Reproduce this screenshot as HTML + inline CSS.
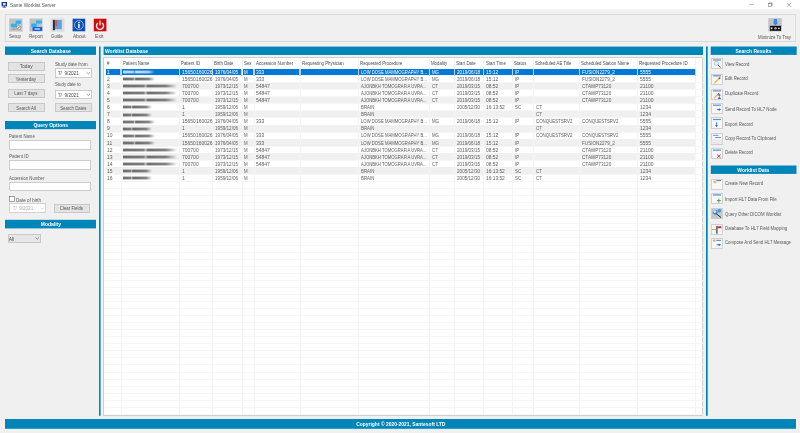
<!DOCTYPE html><html><head><meta charset="utf-8"><style>
*{margin:0;padding:0;box-sizing:border-box}
html,body{width:800px;height:433px;overflow:hidden;background:#f0f0f0;font-family:"Liberation Sans", sans-serif;color:#333}
.a{position:absolute}
.t{position:absolute;white-space:pre;line-height:6px;height:6px;filter:grayscale(1)}
.hb{position:absolute;background:#0085b9}
.btn{position:absolute;background:#e3e3e3;border:0.5px solid #c8c8c8}
.inp{position:absolute;background:#fff;border:0.5px solid #cbcbcb}
.ib{position:absolute;width:11.7px;height:11.2px;background:#f7f7f7;border:0.55px solid #d0d0d0}
svg{position:absolute;overflow:visible}
</style></head><body>
<svg style="left:0;top:0" width="800" height="12"><rect x="0" y="0" width="800" height="9.4" fill="#fff"/></svg>
<svg style="left:0;top:0" width="10" height="10"><rect x="1.6" y="2" width="5.4" height="4.4" fill="#1636a0"/><rect x="3" y="3" width="2.6" height="2.4" fill="#dfe6ff"/><rect x="3.6" y="6.4" width="1.4" height="1" fill="#1636a0"/><rect x="2.6" y="7.3" width="3.4" height="0.7" fill="#3a70e0"/></svg>
<div class="t" style="left:9.75px;top:2.05px;font-size:5.4px;color:#555;transform:scaleX(0.878);transform-origin:0 0;">Sante Worklist Server</div>
<svg style="left:0;top:0" width="800" height="10"><path d="M749 4.6H753.7" stroke="#777" stroke-width="0.5"/><rect x="768.3" y="3.6" width="3" height="3" fill="none" stroke="#666" stroke-width="0.5"/><path d="M769.2 3.6V2.8H772.1V5.8H771.3" fill="none" stroke="#666" stroke-width="0.5"/><path d="M787 2.8L791 6.8M791 2.8L787 6.8" stroke="#666" stroke-width="0.55"/></svg>
<div class="a" style="left:4.7px;top:14px;width:791.2px;height:28px;border:0.6px solid #d9d9d9"></div>
<svg style="left:0;top:0" width="800" height="40"><rect x="9" y="18.25" width="13.75" height="13.5" fill="#d2d2d2"/><rect x="9.8" y="19" width="12.2" height="12" fill="#c2c2c2"/><path d="M18.4 23.9V25.2M13.8 27.2V28.6M11.5 29.2H16.2" stroke="#8a8a8a" stroke-width="0.6"/><rect x="15.6" y="20.5" width="5.5" height="3.4" fill="#2ab4f2"/><rect x="10.8" y="23.7" width="6.1" height="3.5" fill="#2ab4f2"/><circle cx="18.7" cy="27.7" r="2.1" fill="#f2f2f2" stroke="#6a6a6a" stroke-width="0.45"/><path d="M17.7 28.8L19.8 26.6" stroke="#d02020" stroke-width="0.9"/><rect x="29.25" y="18.25" width="13.5" height="13.5" fill="#d2d2d2"/><rect x="30" y="19" width="12" height="12" fill="#c2c2c2"/><path d="M38.6 23.3V24.6M34 27V28" stroke="#8a8a8a" stroke-width="0.6"/><rect x="36" y="20.4" width="5.75" height="3.1" fill="#2ab4f2"/><rect x="31.25" y="23.5" width="5.5" height="3.5" fill="#2ab4f2"/><rect x="32.5" y="27" width="9.75" height="4" fill="#1c5fe6"/><rect x="34.5" y="28.2" width="5.5" height="1.6" fill="#a8c6ff"/><rect x="50.5" y="18.25" width="14" height="13.5" fill="#dedede"/><rect x="54.9" y="20" width="6.9" height="9.3" fill="#5ea2e2"/><rect x="54.9" y="29.3" width="6.9" height="0.9" fill="#c8d4dc"/><rect x="52.9" y="19.9" width="2" height="10.3" fill="#2a2a3a"/><rect x="55.5" y="20" width="1.3" height="6" fill="#e04040"/><rect x="72.6" y="18.7" width="12.6" height="12.6" fill="#0d4fb6"/><circle cx="78.9" cy="25" r="4.4" fill="none" stroke="#e8eeff" stroke-width="0.6"/><circle cx="78.9" cy="22.5" r="0.85" fill="#f0f4ff"/><rect x="78.1" y="23.9" width="1.6" height="4.1" fill="#f0f4ff"/><rect x="93.8" y="18.7" width="12.6" height="12.6" fill="#d40808"/><path d="M98 23A3.5 3.5 0 1 0 102 23" fill="none" stroke="#f8f0f0" stroke-width="1.45"/><path d="M100 20.4V25.3" stroke="#f8f0f0" stroke-width="1.3"/><rect x="768.3" y="18.2" width="13.6" height="13.3" fill="#c4c4c4"/><rect x="773.8" y="19" width="3.2" height="3.8" fill="#2e8af0"/><path d="M772.6 22.6H778.2L775.4 25.4Z" fill="#2e8af0"/><rect x="769.9" y="25.8" width="11.1" height="5" fill="#0a0a1a"/><rect x="770.8" y="27.4" width="1.6" height="1.8" fill="#eee"/><circle cx="775.5" cy="28.3" r="1.2" fill="#aaa"/><circle cx="778.9" cy="28.3" r="0.9" fill="#ddd"/></svg>
<div class="t" style="left:8.75px;top:33.20px;font-size:5.4px;color:#565656;transform:scaleX(0.850);transform-origin:0 0;">Setup</div>
<div class="t" style="left:28.60px;top:33.20px;font-size:5.4px;color:#565656;transform:scaleX(0.858);transform-origin:0 0;">Report</div>
<div class="t" style="left:51.10px;top:33.20px;font-size:5.4px;color:#565656;transform:scaleX(0.812);transform-origin:0 0;">Guide</div>
<div class="t" style="left:72.60px;top:33.20px;font-size:5.4px;color:#565656;transform:scaleX(0.893);transform-origin:0 0;">About</div>
<div class="t" style="left:94.50px;top:33.20px;font-size:5.4px;color:#565656;transform:scaleX(0.944);transform-origin:0 0;">Exit</div>
<div class="t" style="left:758.00px;top:33.50px;font-size:5.4px;color:#565656;transform:scaleX(0.817);transform-origin:0 0;">Minimize To Tray</div>
<svg style="left:0;top:0" width="800" height="433"><rect x="5" y="46.5" width="91" height="8.4" fill="#0085b9"/></svg>
<div class="t" style="left:28.74px;top:47.90px;font-size:5.4px;color:#fff;font-weight:bold;transform:scaleX(0.924);transform-origin:50% 0;">Search Database</div>
<div class="btn" style="left:8.1px;top:62px;width:36.5px;height:8.7px"></div>
<div class="t" style="left:18.89px;top:63.40px;font-size:5.4px;color:#565656;transform:scaleX(0.902);transform-origin:50% 0;">Today</div>
<div class="btn" style="left:8.1px;top:74.3px;width:36.5px;height:8.7px"></div>
<div class="t" style="left:14.19px;top:75.70px;font-size:5.4px;color:#565656;transform:scaleX(0.865);transform-origin:50% 0;">Yesterday</div>
<div class="btn" style="left:8.1px;top:89px;width:36.5px;height:8.7px"></div>
<div class="t" style="left:12.29px;top:90.40px;font-size:5.4px;color:#565656;transform:scaleX(0.844);transform-origin:50% 0;">Last 7 days</div>
<div class="btn" style="left:8.1px;top:103.2px;width:36.5px;height:8.7px"></div>
<div class="t" style="left:13.94px;top:104.60px;font-size:5.4px;color:#565656;transform:scaleX(0.806);transform-origin:50% 0;">Search All</div>
<div class="t" style="left:55.00px;top:61.30px;font-size:5.4px;color:#565656;transform:scaleX(0.855);transform-origin:0 0;">Study date from</div>
<div class="t" style="left:55.00px;top:80.80px;font-size:5.4px;color:#565656;transform:scaleX(0.806);transform-origin:0 0;">Study date to</div>
<div class="inp" style="left:54.8px;top:68px;width:36.8px;height:9.7px"></div>
<div class="t" style="left:58.10px;top:70.10px;font-size:5.4px;color:#444;transform:scaleX(0.866);transform-origin:0 0;">7/  9/2021</div>
<svg style="left:0;top:0" width="100" height="110"><path d="M86.6 72.3L88.3 73.9L90 72.3" fill="none" stroke="#4a4a4a" stroke-width="0.5"/></svg>
<div class="inp" style="left:54.8px;top:89.6px;width:36.8px;height:9.7px"></div>
<div class="t" style="left:58.10px;top:91.70px;font-size:5.4px;color:#444;transform:scaleX(0.866);transform-origin:0 0;">7/  9/2021</div>
<svg style="left:0;top:0" width="100" height="110"><path d="M86.6 93.89999999999999L88.3 95.5L90 93.89999999999999" fill="none" stroke="#4a4a4a" stroke-width="0.5"/></svg>
<div class="btn" style="left:55px;top:103.2px;width:37px;height:8.8px"></div>
<div class="t" style="left:57.14px;top:104.60px;font-size:5.4px;color:#565656;transform:scaleX(0.806);transform-origin:50% 0;">Search Dates</div>
<svg style="left:0;top:0" width="800" height="433"><rect x="5" y="121" width="91" height="8.2" fill="#0085b9"/></svg>
<div class="t" style="left:31.75px;top:122.30px;font-size:5.4px;color:#fff;font-weight:bold;transform:scaleX(0.921);transform-origin:50% 0;">Query Options</div>
<div class="t" style="left:9.10px;top:132.85px;font-size:5.4px;color:#565656;transform:scaleX(0.789);transform-origin:0 0;">Patient Name</div>
<div class="inp" style="left:9px;top:140px;width:81.6px;height:9.7px"></div>
<div class="t" style="left:9.10px;top:152.90px;font-size:5.4px;color:#565656;transform:scaleX(0.835);transform-origin:0 0;">Patient ID</div>
<div class="inp" style="left:9px;top:159.9px;width:81.6px;height:9.7px"></div>
<div class="t" style="left:9.10px;top:175.00px;font-size:5.4px;color:#565656;transform:scaleX(0.781);transform-origin:0 0;">Accession Number</div>
<div class="inp" style="left:9px;top:181.6px;width:81.6px;height:9.7px"></div>
<svg style="left:0;top:0" width="100" height="210"><rect x="9.45" y="196.65" width="4.9" height="4.9" fill="#fff" stroke="#4a4a4a" stroke-width="0.5"/></svg>
<div class="t" style="left:15.50px;top:196.50px;font-size:5.4px;color:#565656;transform:scaleX(0.857);transform-origin:0 0;">Date of birth</div>
<div class="inp" style="left:9.1px;top:203.3px;width:36.5px;height:9.7px;border-color:#d2d2d2"></div>
<div class="t" style="left:12.70px;top:205.40px;font-size:5.4px;color:#aaa;transform:scaleX(0.841);transform-origin:0 0;">7/  9/2021</div>
<svg style="left:0;top:0" width="100" height="220"><path d="M40.8 207.6L42.3 209.1L43.8 207.6" fill="none" stroke="#999" stroke-width="0.45"/></svg>
<div class="btn" style="left:54px;top:204px;width:35.6px;height:8.7px"></div>
<div class="t" style="left:57.40px;top:205.40px;font-size:5.4px;color:#565656;transform:scaleX(0.806);transform-origin:50% 0;">Clear Fields</div>
<svg style="left:0;top:0" width="800" height="433"><rect x="5" y="219.8" width="91" height="8.6" fill="#0085b9"/></svg>
<div class="t" style="left:39.55px;top:221.30px;font-size:5.4px;color:#fff;font-weight:bold;transform:scaleX(0.921);transform-origin:50% 0;">Modality</div>
<div class="btn" style="left:8px;top:234px;width:33px;height:8.7px;background:#e6e6e6"></div>
<div class="t" style="left:9.40px;top:235.50px;font-size:5.4px;color:#333;transform:scaleX(0.806);transform-origin:0 0;">All</div>
<svg style="left:0;top:0" width="100" height="250"><path d="M35.6 237.5L37.3 239.2L39 237.5" fill="none" stroke="#444" stroke-width="0.55"/></svg>
<svg style="left:0;top:0" width="800" height="433"><rect x="99" y="46.4" width="1.6" height="369.4" fill="#0085b9"/><rect x="706" y="46.4" width="1.7" height="369.4" fill="#0085b9"/></svg>
<svg style="left:0;top:0" width="800" height="433"><rect x="103.6" y="46.6" width="599.4" height="8.4" fill="#0085b9"/></svg>
<div class="t" style="left:105.40px;top:48.00px;font-size:5.4px;color:#fff;font-weight:bold;transform:scaleX(0.921);transform-origin:0 0;">Worklist Database</div>
<div class="a" style="left:103.4px;top:57.4px;width:599.7px;height:358.20000000000005px;background:#fff;border:0.6px solid #cfcfcf"></div>
<div class="a" style="left:106px;top:68.50px;width:589.5px;height:7.06px;background:#0078d7"></div><div class="a" style="left:104px;top:75.16px;width:598.5px;height:0.45px;background:#f6f6f6"></div><div class="a" style="left:104px;top:82.21px;width:598.5px;height:0.45px;background:#f6f6f6"></div><div class="a" style="left:106px;top:82.61px;width:589.5px;height:7.06px;background:#f0f0f0"></div><div class="a" style="left:104px;top:89.27px;width:598.5px;height:0.45px;background:#f6f6f6"></div><div class="a" style="left:104px;top:96.32px;width:598.5px;height:0.45px;background:#f6f6f6"></div><div class="a" style="left:106px;top:96.72px;width:589.5px;height:7.06px;background:#f0f0f0"></div><div class="a" style="left:104px;top:103.38px;width:598.5px;height:0.45px;background:#f6f6f6"></div><div class="a" style="left:104px;top:110.44px;width:598.5px;height:0.45px;background:#f6f6f6"></div><div class="a" style="left:106px;top:110.84px;width:589.5px;height:7.06px;background:#f0f0f0"></div><div class="a" style="left:104px;top:117.49px;width:598.5px;height:0.45px;background:#f6f6f6"></div><div class="a" style="left:104px;top:124.55px;width:598.5px;height:0.45px;background:#f6f6f6"></div><div class="a" style="left:106px;top:124.95px;width:589.5px;height:7.06px;background:#f0f0f0"></div><div class="a" style="left:104px;top:131.60px;width:598.5px;height:0.45px;background:#f6f6f6"></div><div class="a" style="left:104px;top:138.66px;width:598.5px;height:0.45px;background:#f6f6f6"></div><div class="a" style="left:106px;top:139.06px;width:589.5px;height:7.06px;background:#f0f0f0"></div><div class="a" style="left:104px;top:145.72px;width:598.5px;height:0.45px;background:#f6f6f6"></div><div class="a" style="left:104px;top:152.77px;width:598.5px;height:0.45px;background:#f6f6f6"></div><div class="a" style="left:106px;top:153.17px;width:589.5px;height:7.06px;background:#f0f0f0"></div><div class="a" style="left:104px;top:159.83px;width:598.5px;height:0.45px;background:#f6f6f6"></div><div class="a" style="left:104px;top:166.88px;width:598.5px;height:0.45px;background:#f6f6f6"></div><div class="a" style="left:106px;top:167.28px;width:589.5px;height:7.06px;background:#f0f0f0"></div><div class="a" style="left:104px;top:173.94px;width:598.5px;height:0.45px;background:#f6f6f6"></div><div class="a" style="left:104px;top:181.00px;width:598.5px;height:0.45px;background:#f6f6f6"></div><div class="a" style="left:104px;top:188.05px;width:598.5px;height:0.45px;background:#f6f6f6"></div><div class="a" style="left:104px;top:195.11px;width:598.5px;height:0.45px;background:#f6f6f6"></div><div class="a" style="left:104px;top:202.16px;width:598.5px;height:0.45px;background:#f6f6f6"></div><div class="a" style="left:104px;top:209.22px;width:598.5px;height:0.45px;background:#f6f6f6"></div><div class="a" style="left:104px;top:216.28px;width:598.5px;height:0.45px;background:#f6f6f6"></div><div class="a" style="left:104px;top:223.33px;width:598.5px;height:0.45px;background:#f6f6f6"></div><div class="a" style="left:104px;top:230.39px;width:598.5px;height:0.45px;background:#f6f6f6"></div><div class="a" style="left:104px;top:237.44px;width:598.5px;height:0.45px;background:#f6f6f6"></div><div class="a" style="left:104px;top:244.50px;width:598.5px;height:0.45px;background:#f6f6f6"></div><div class="a" style="left:104px;top:251.56px;width:598.5px;height:0.45px;background:#f6f6f6"></div><div class="a" style="left:104px;top:258.61px;width:598.5px;height:0.45px;background:#f6f6f6"></div><div class="a" style="left:104px;top:265.67px;width:598.5px;height:0.45px;background:#f6f6f6"></div><div class="a" style="left:104px;top:272.72px;width:598.5px;height:0.45px;background:#f6f6f6"></div><div class="a" style="left:104px;top:279.78px;width:598.5px;height:0.45px;background:#f6f6f6"></div><div class="a" style="left:104px;top:286.84px;width:598.5px;height:0.45px;background:#f6f6f6"></div><div class="a" style="left:104px;top:293.89px;width:598.5px;height:0.45px;background:#f6f6f6"></div><div class="a" style="left:104px;top:300.95px;width:598.5px;height:0.45px;background:#f6f6f6"></div><div class="a" style="left:104px;top:308.00px;width:598.5px;height:0.45px;background:#f6f6f6"></div><div class="a" style="left:104px;top:315.06px;width:598.5px;height:0.45px;background:#f6f6f6"></div><div class="a" style="left:104px;top:322.12px;width:598.5px;height:0.45px;background:#f6f6f6"></div><div class="a" style="left:104px;top:329.17px;width:598.5px;height:0.45px;background:#f6f6f6"></div><div class="a" style="left:104px;top:336.23px;width:598.5px;height:0.45px;background:#f6f6f6"></div><div class="a" style="left:104px;top:343.28px;width:598.5px;height:0.45px;background:#f6f6f6"></div><div class="a" style="left:104px;top:350.34px;width:598.5px;height:0.45px;background:#f6f6f6"></div><div class="a" style="left:104px;top:357.40px;width:598.5px;height:0.45px;background:#f6f6f6"></div><div class="a" style="left:104px;top:364.45px;width:598.5px;height:0.45px;background:#f6f6f6"></div><div class="a" style="left:104px;top:371.51px;width:598.5px;height:0.45px;background:#f6f6f6"></div><div class="a" style="left:104px;top:378.56px;width:598.5px;height:0.45px;background:#f6f6f6"></div><div class="a" style="left:104px;top:385.62px;width:598.5px;height:0.45px;background:#f6f6f6"></div><div class="a" style="left:104px;top:392.68px;width:598.5px;height:0.45px;background:#f6f6f6"></div><div class="a" style="left:104px;top:399.73px;width:598.5px;height:0.45px;background:#f6f6f6"></div><div class="a" style="left:104px;top:406.79px;width:598.5px;height:0.45px;background:#f6f6f6"></div><div class="a" style="left:104px;top:413.84px;width:598.5px;height:0.45px;background:#f6f6f6"></div><div class="a" style="left:104px;top:420.90px;width:598.5px;height:0.45px;background:#f6f6f6"></div><div class="a" style="left:120.8px;top:58.0px;width:0.45px;height:357.00000000000006px;background:#f4f4f4"></div><div class="a" style="left:178.9px;top:58.0px;width:0.45px;height:357.00000000000006px;background:#f4f4f4"></div><div class="a" style="left:212.3px;top:58.0px;width:0.45px;height:357.00000000000006px;background:#f4f4f4"></div><div class="a" style="left:241.60000000000002px;top:58.0px;width:0.45px;height:357.00000000000006px;background:#f4f4f4"></div><div class="a" style="left:253.8px;top:58.0px;width:0.45px;height:357.00000000000006px;background:#f4f4f4"></div><div class="a" style="left:299.8px;top:58.0px;width:0.45px;height:357.00000000000006px;background:#f4f4f4"></div><div class="a" style="left:358.2px;top:58.0px;width:0.45px;height:357.00000000000006px;background:#f4f4f4"></div><div class="a" style="left:429.0px;top:58.0px;width:0.45px;height:357.00000000000006px;background:#f4f4f4"></div><div class="a" style="left:454.3px;top:58.0px;width:0.45px;height:357.00000000000006px;background:#f4f4f4"></div><div class="a" style="left:483.40000000000003px;top:58.0px;width:0.45px;height:357.00000000000006px;background:#f4f4f4"></div><div class="a" style="left:512.0px;top:58.0px;width:0.45px;height:357.00000000000006px;background:#f4f4f4"></div><div class="a" style="left:533.3px;top:58.0px;width:0.45px;height:357.00000000000006px;background:#f4f4f4"></div><div class="a" style="left:578.9px;top:58.0px;width:0.45px;height:357.00000000000006px;background:#f4f4f4"></div><div class="a" style="left:637.3px;top:58.0px;width:0.45px;height:357.00000000000006px;background:#f4f4f4"></div><div class="a" style="left:695.3px;top:58.0px;width:0.45px;height:357.00000000000006px;background:#f4f4f4"></div><div class="a" style="left:120.4px;top:68.5px;width:1.2px;height:7.056px;background:#c4d0ea"></div><div class="a" style="left:178.5px;top:68.5px;width:1.2px;height:7.056px;background:#c4d0ea"></div><div class="a" style="left:211.9px;top:68.5px;width:1.2px;height:7.056px;background:#c4d0ea"></div><div class="a" style="left:241.20000000000002px;top:68.5px;width:1.2px;height:7.056px;background:#c4d0ea"></div><div class="a" style="left:253.4px;top:68.5px;width:1.2px;height:7.056px;background:#c4d0ea"></div><div class="a" style="left:299.4px;top:68.5px;width:1.2px;height:7.056px;background:#c4d0ea"></div><div class="a" style="left:357.79999999999995px;top:68.5px;width:1.2px;height:7.056px;background:#c4d0ea"></div><div class="a" style="left:428.59999999999997px;top:68.5px;width:1.2px;height:7.056px;background:#c4d0ea"></div><div class="a" style="left:453.9px;top:68.5px;width:1.2px;height:7.056px;background:#c4d0ea"></div><div class="a" style="left:483.0px;top:68.5px;width:1.2px;height:7.056px;background:#c4d0ea"></div><div class="a" style="left:511.6px;top:68.5px;width:1.2px;height:7.056px;background:#c4d0ea"></div><div class="a" style="left:532.9px;top:68.5px;width:1.2px;height:7.056px;background:#c4d0ea"></div><div class="a" style="left:578.5px;top:68.5px;width:1.2px;height:7.056px;background:#c4d0ea"></div><div class="a" style="left:636.9px;top:68.5px;width:1.2px;height:7.056px;background:#c4d0ea"></div><div class="a" style="left:694.9px;top:68.5px;width:1.2px;height:7.056px;background:#c4d0ea"></div>
<div class="t" style="left:107.00px;top:60.30px;font-size:5.4px;color:#4a4a4a;transform:scaleX(0.806);transform-origin:0 0;">#</div>
<div class="t" style="left:122.90px;top:60.30px;font-size:5.4px;color:#4a4a4a;transform:scaleX(0.813);transform-origin:0 0;">Patient Name</div>
<div class="t" style="left:181.00px;top:60.30px;font-size:5.4px;color:#4a4a4a;transform:scaleX(0.806);transform-origin:0 0;">Patient ID</div>
<div class="t" style="left:214.40px;top:60.30px;font-size:5.4px;color:#4a4a4a;transform:scaleX(0.806);transform-origin:0 0;">Birth Date</div>
<div class="t" style="left:243.70px;top:60.30px;font-size:5.4px;color:#4a4a4a;transform:scaleX(0.806);transform-origin:0 0;">Sex</div>
<div class="t" style="left:255.90px;top:60.30px;font-size:5.4px;color:#4a4a4a;transform:scaleX(0.821);transform-origin:0 0;">Accession Number</div>
<div class="t" style="left:301.90px;top:60.30px;font-size:5.4px;color:#4a4a4a;transform:scaleX(0.806);transform-origin:0 0;">Requesting Physician</div>
<div class="t" style="left:360.30px;top:60.30px;font-size:5.4px;color:#4a4a4a;transform:scaleX(0.806);transform-origin:0 0;">Requested Procedure</div>
<div class="t" style="left:431.10px;top:60.30px;font-size:5.4px;color:#4a4a4a;transform:scaleX(0.806);transform-origin:0 0;">Modality</div>
<div class="t" style="left:456.40px;top:60.30px;font-size:5.4px;color:#4a4a4a;transform:scaleX(0.806);transform-origin:0 0;">Start Date</div>
<div class="t" style="left:485.50px;top:60.30px;font-size:5.4px;color:#4a4a4a;transform:scaleX(0.806);transform-origin:0 0;">Start Time</div>
<div class="t" style="left:514.10px;top:60.30px;font-size:5.4px;color:#4a4a4a;transform:scaleX(0.806);transform-origin:0 0;">Status</div>
<div class="t" style="left:535.40px;top:60.30px;font-size:5.4px;color:#4a4a4a;transform:scaleX(0.806);transform-origin:0 0;">Scheduled AE Title</div>
<div class="t" style="left:581.00px;top:60.30px;font-size:5.4px;color:#4a4a4a;transform:scaleX(0.806);transform-origin:0 0;">Scheduled Station Name</div>
<div class="t" style="left:639.40px;top:60.30px;font-size:5.4px;color:#4a4a4a;transform:scaleX(0.821);transform-origin:0 0;">Requested Procedure ID</div>
<div class="t" style="left:107.20px;top:68.95px;font-size:5.4px;color:#fff;transform:scaleX(0.926);transform-origin:0 0;">1</div>
<div class="a" style="left:123px;top:70.20px;width:31.5px;height:4px;background:linear-gradient(90deg,rgba(230,238,255,0.85) 0%,rgba(230,238,255,0.765) 32%,rgba(230,238,255,0.3825) 36%,rgba(230,238,255,0.85) 40%,rgba(230,238,255,0.7224999999999999) 80%,rgba(230,238,255,0) 100%);-webkit-mask-image:linear-gradient(180deg,transparent 0%,#000 30%,#000 70%,transparent 100%)"></div>
<div class="t" style="left:181.50px;top:68.95px;font-size:5.4px;color:#fff;transform:scaleX(0.926);transform-origin:0 0;">15650160026</div>
<div class="t" style="left:214.90px;top:68.95px;font-size:5.4px;color:#fff;transform:scaleX(0.855);transform-origin:0 0;">1976/04/05</div>
<div class="t" style="left:244.20px;top:68.95px;font-size:5.4px;color:#fff;transform:scaleX(0.806);transform-origin:0 0;">M</div>
<div class="t" style="left:256.40px;top:68.95px;font-size:5.4px;color:#fff;transform:scaleX(0.926);transform-origin:0 0;">333</div>
<div class="t" style="left:360.80px;top:68.95px;font-size:5.4px;color:#fff;transform:scaleX(0.783);transform-origin:0 0;">LOW DOSE MAMMOGRAPHY B...</div>
<div class="t" style="left:431.60px;top:68.95px;font-size:5.4px;color:#fff;transform:scaleX(0.806);transform-origin:0 0;">MG</div>
<div class="t" style="left:456.90px;top:68.95px;font-size:5.4px;color:#fff;transform:scaleX(0.855);transform-origin:0 0;">2019/06/18</div>
<div class="t" style="left:486.00px;top:68.95px;font-size:5.4px;color:#fff;transform:scaleX(0.902);transform-origin:0 0;">15:12</div>
<div class="t" style="left:514.60px;top:68.95px;font-size:5.4px;color:#fff;transform:scaleX(0.806);transform-origin:0 0;">IP</div>
<div class="t" style="left:581.50px;top:68.95px;font-size:5.4px;color:#fff;transform:scaleX(0.856);transform-origin:0 0;">FUSION2279_2</div>
<div class="t" style="left:639.90px;top:68.95px;font-size:5.4px;color:#fff;transform:scaleX(0.926);transform-origin:0 0;">5555</div>
<div class="t" style="left:107.20px;top:76.00px;font-size:5.4px;color:#5c5c5c;transform:scaleX(0.926);transform-origin:0 0;">2</div>
<div class="a" style="left:123px;top:77.26px;width:31.5px;height:4px;background:linear-gradient(90deg,rgba(85,85,85,0.85) 0%,rgba(85,85,85,0.765) 32%,rgba(85,85,85,0.3825) 36%,rgba(85,85,85,0.85) 40%,rgba(85,85,85,0.7224999999999999) 80%,rgba(85,85,85,0) 100%);-webkit-mask-image:linear-gradient(180deg,transparent 0%,#000 30%,#000 70%,transparent 100%)"></div>
<div class="t" style="left:181.50px;top:76.00px;font-size:5.4px;color:#5c5c5c;transform:scaleX(0.926);transform-origin:0 0;">15650160026</div>
<div class="t" style="left:214.90px;top:76.00px;font-size:5.4px;color:#5c5c5c;transform:scaleX(0.855);transform-origin:0 0;">1976/04/05</div>
<div class="t" style="left:244.20px;top:76.00px;font-size:5.4px;color:#5c5c5c;transform:scaleX(0.806);transform-origin:0 0;">M</div>
<div class="t" style="left:256.40px;top:76.00px;font-size:5.4px;color:#5c5c5c;transform:scaleX(0.926);transform-origin:0 0;">333</div>
<div class="t" style="left:360.80px;top:76.00px;font-size:5.4px;color:#5c5c5c;transform:scaleX(0.783);transform-origin:0 0;">LOW DOSE MAMMOGRAPHY B...</div>
<div class="t" style="left:431.60px;top:76.00px;font-size:5.4px;color:#5c5c5c;transform:scaleX(0.806);transform-origin:0 0;">MG</div>
<div class="t" style="left:456.90px;top:76.00px;font-size:5.4px;color:#5c5c5c;transform:scaleX(0.855);transform-origin:0 0;">2019/06/18</div>
<div class="t" style="left:486.00px;top:76.00px;font-size:5.4px;color:#5c5c5c;transform:scaleX(0.902);transform-origin:0 0;">15:12</div>
<div class="t" style="left:514.60px;top:76.00px;font-size:5.4px;color:#5c5c5c;transform:scaleX(0.806);transform-origin:0 0;">IP</div>
<div class="t" style="left:581.50px;top:76.00px;font-size:5.4px;color:#5c5c5c;transform:scaleX(0.856);transform-origin:0 0;">FUSION2279_2</div>
<div class="t" style="left:639.90px;top:76.00px;font-size:5.4px;color:#5c5c5c;transform:scaleX(0.926);transform-origin:0 0;">5555</div>
<div class="t" style="left:107.20px;top:83.06px;font-size:5.4px;color:#5c5c5c;transform:scaleX(0.926);transform-origin:0 0;">3</div>
<div class="a" style="left:123px;top:84.31px;width:54px;height:4px;background:linear-gradient(90deg,rgba(85,85,85,0.85) 0%,rgba(85,85,85,0.765) 38%,rgba(85,85,85,0.3825) 42%,rgba(85,85,85,0.85) 46%,rgba(85,85,85,0.7224999999999999) 80%,rgba(85,85,85,0) 100%);-webkit-mask-image:linear-gradient(180deg,transparent 0%,#000 30%,#000 70%,transparent 100%)"></div>
<div class="t" style="left:181.50px;top:83.06px;font-size:5.4px;color:#5c5c5c;transform:scaleX(0.926);transform-origin:0 0;">700700</div>
<div class="t" style="left:214.90px;top:83.06px;font-size:5.4px;color:#5c5c5c;transform:scaleX(0.855);transform-origin:0 0;">1973/12/15</div>
<div class="t" style="left:244.20px;top:83.06px;font-size:5.4px;color:#5c5c5c;transform:scaleX(0.806);transform-origin:0 0;">M</div>
<div class="t" style="left:256.40px;top:83.06px;font-size:5.4px;color:#5c5c5c;transform:scaleX(0.926);transform-origin:0 0;">54847</div>
<div class="t" style="left:360.80px;top:83.06px;font-size:5.4px;color:#5c5c5c;transform:scaleX(0.781);transform-origin:0 0;">AJONBKH TOMOGRAFIA UVRA...</div>
<div class="t" style="left:431.60px;top:83.06px;font-size:5.4px;color:#5c5c5c;transform:scaleX(0.806);transform-origin:0 0;">CT</div>
<div class="t" style="left:456.90px;top:83.06px;font-size:5.4px;color:#5c5c5c;transform:scaleX(0.855);transform-origin:0 0;">2019/03/15</div>
<div class="t" style="left:486.00px;top:83.06px;font-size:5.4px;color:#5c5c5c;transform:scaleX(0.902);transform-origin:0 0;">08:52</div>
<div class="t" style="left:514.60px;top:83.06px;font-size:5.4px;color:#5c5c5c;transform:scaleX(0.806);transform-origin:0 0;">IP</div>
<div class="t" style="left:581.50px;top:83.06px;font-size:5.4px;color:#5c5c5c;transform:scaleX(0.866);transform-origin:0 0;">CTAWP73120</div>
<div class="t" style="left:639.90px;top:83.06px;font-size:5.4px;color:#5c5c5c;transform:scaleX(0.926);transform-origin:0 0;">21100</div>
<div class="t" style="left:107.20px;top:90.12px;font-size:5.4px;color:#5c5c5c;transform:scaleX(0.926);transform-origin:0 0;">4</div>
<div class="a" style="left:123px;top:91.37px;width:54px;height:4px;background:linear-gradient(90deg,rgba(85,85,85,0.85) 0%,rgba(85,85,85,0.765) 38%,rgba(85,85,85,0.3825) 42%,rgba(85,85,85,0.85) 46%,rgba(85,85,85,0.7224999999999999) 80%,rgba(85,85,85,0) 100%);-webkit-mask-image:linear-gradient(180deg,transparent 0%,#000 30%,#000 70%,transparent 100%)"></div>
<div class="t" style="left:181.50px;top:90.12px;font-size:5.4px;color:#5c5c5c;transform:scaleX(0.926);transform-origin:0 0;">700700</div>
<div class="t" style="left:214.90px;top:90.12px;font-size:5.4px;color:#5c5c5c;transform:scaleX(0.855);transform-origin:0 0;">1973/12/15</div>
<div class="t" style="left:244.20px;top:90.12px;font-size:5.4px;color:#5c5c5c;transform:scaleX(0.806);transform-origin:0 0;">M</div>
<div class="t" style="left:256.40px;top:90.12px;font-size:5.4px;color:#5c5c5c;transform:scaleX(0.926);transform-origin:0 0;">54847</div>
<div class="t" style="left:360.80px;top:90.12px;font-size:5.4px;color:#5c5c5c;transform:scaleX(0.781);transform-origin:0 0;">AJONBKH TOMOGRAFIA UVRA...</div>
<div class="t" style="left:431.60px;top:90.12px;font-size:5.4px;color:#5c5c5c;transform:scaleX(0.806);transform-origin:0 0;">CT</div>
<div class="t" style="left:456.90px;top:90.12px;font-size:5.4px;color:#5c5c5c;transform:scaleX(0.855);transform-origin:0 0;">2019/03/15</div>
<div class="t" style="left:486.00px;top:90.12px;font-size:5.4px;color:#5c5c5c;transform:scaleX(0.902);transform-origin:0 0;">08:52</div>
<div class="t" style="left:514.60px;top:90.12px;font-size:5.4px;color:#5c5c5c;transform:scaleX(0.806);transform-origin:0 0;">IP</div>
<div class="t" style="left:581.50px;top:90.12px;font-size:5.4px;color:#5c5c5c;transform:scaleX(0.866);transform-origin:0 0;">CTAWP73120</div>
<div class="t" style="left:639.90px;top:90.12px;font-size:5.4px;color:#5c5c5c;transform:scaleX(0.926);transform-origin:0 0;">21100</div>
<div class="t" style="left:107.20px;top:97.17px;font-size:5.4px;color:#5c5c5c;transform:scaleX(0.926);transform-origin:0 0;">5</div>
<div class="a" style="left:123px;top:98.42px;width:54px;height:4px;background:linear-gradient(90deg,rgba(85,85,85,0.85) 0%,rgba(85,85,85,0.765) 38%,rgba(85,85,85,0.3825) 42%,rgba(85,85,85,0.85) 46%,rgba(85,85,85,0.7224999999999999) 80%,rgba(85,85,85,0) 100%);-webkit-mask-image:linear-gradient(180deg,transparent 0%,#000 30%,#000 70%,transparent 100%)"></div>
<div class="t" style="left:181.50px;top:97.17px;font-size:5.4px;color:#5c5c5c;transform:scaleX(0.926);transform-origin:0 0;">700700</div>
<div class="t" style="left:214.90px;top:97.17px;font-size:5.4px;color:#5c5c5c;transform:scaleX(0.855);transform-origin:0 0;">1973/12/15</div>
<div class="t" style="left:244.20px;top:97.17px;font-size:5.4px;color:#5c5c5c;transform:scaleX(0.806);transform-origin:0 0;">M</div>
<div class="t" style="left:256.40px;top:97.17px;font-size:5.4px;color:#5c5c5c;transform:scaleX(0.926);transform-origin:0 0;">54847</div>
<div class="t" style="left:360.80px;top:97.17px;font-size:5.4px;color:#5c5c5c;transform:scaleX(0.781);transform-origin:0 0;">AJONBKH TOMOGRAFIA UVRA...</div>
<div class="t" style="left:431.60px;top:97.17px;font-size:5.4px;color:#5c5c5c;transform:scaleX(0.806);transform-origin:0 0;">CT</div>
<div class="t" style="left:456.90px;top:97.17px;font-size:5.4px;color:#5c5c5c;transform:scaleX(0.855);transform-origin:0 0;">2019/03/15</div>
<div class="t" style="left:486.00px;top:97.17px;font-size:5.4px;color:#5c5c5c;transform:scaleX(0.902);transform-origin:0 0;">08:52</div>
<div class="t" style="left:514.60px;top:97.17px;font-size:5.4px;color:#5c5c5c;transform:scaleX(0.806);transform-origin:0 0;">IP</div>
<div class="t" style="left:581.50px;top:97.17px;font-size:5.4px;color:#5c5c5c;transform:scaleX(0.866);transform-origin:0 0;">CTAWP73120</div>
<div class="t" style="left:639.90px;top:97.17px;font-size:5.4px;color:#5c5c5c;transform:scaleX(0.926);transform-origin:0 0;">21100</div>
<div class="t" style="left:107.20px;top:104.23px;font-size:5.4px;color:#5c5c5c;transform:scaleX(0.926);transform-origin:0 0;">6</div>
<div class="a" style="left:123px;top:105.48px;width:28.5px;height:4px;background:linear-gradient(90deg,rgba(85,85,85,0.85) 0%,rgba(85,85,85,0.765) 26%,rgba(85,85,85,0.3825) 30%,rgba(85,85,85,0.85) 34%,rgba(85,85,85,0.7224999999999999) 80%,rgba(85,85,85,0) 100%);-webkit-mask-image:linear-gradient(180deg,transparent 0%,#000 30%,#000 70%,transparent 100%)"></div>
<div class="t" style="left:181.50px;top:104.23px;font-size:5.4px;color:#5c5c5c;transform:scaleX(0.926);transform-origin:0 0;">1</div>
<div class="t" style="left:214.90px;top:104.23px;font-size:5.4px;color:#5c5c5c;transform:scaleX(0.855);transform-origin:0 0;">1959/12/06</div>
<div class="t" style="left:244.20px;top:104.23px;font-size:5.4px;color:#5c5c5c;transform:scaleX(0.806);transform-origin:0 0;">M</div>
<div class="t" style="left:360.80px;top:104.23px;font-size:5.4px;color:#5c5c5c;transform:scaleX(0.806);transform-origin:0 0;">BRAIN</div>
<div class="t" style="left:456.90px;top:104.23px;font-size:5.4px;color:#5c5c5c;transform:scaleX(0.855);transform-origin:0 0;">2005/12/30</div>
<div class="t" style="left:486.00px;top:104.23px;font-size:5.4px;color:#5c5c5c;transform:scaleX(0.896);transform-origin:0 0;">16:13:52</div>
<div class="t" style="left:514.60px;top:104.23px;font-size:5.4px;color:#5c5c5c;transform:scaleX(0.806);transform-origin:0 0;">SC</div>
<div class="t" style="left:535.90px;top:104.23px;font-size:5.4px;color:#5c5c5c;transform:scaleX(0.806);transform-origin:0 0;">CT</div>
<div class="t" style="left:639.90px;top:104.23px;font-size:5.4px;color:#5c5c5c;transform:scaleX(0.926);transform-origin:0 0;">1234</div>
<div class="t" style="left:107.20px;top:111.28px;font-size:5.4px;color:#5c5c5c;transform:scaleX(0.926);transform-origin:0 0;">7</div>
<div class="a" style="left:123px;top:112.54px;width:28.5px;height:4px;background:linear-gradient(90deg,rgba(85,85,85,0.85) 0%,rgba(85,85,85,0.765) 26%,rgba(85,85,85,0.3825) 30%,rgba(85,85,85,0.85) 34%,rgba(85,85,85,0.7224999999999999) 80%,rgba(85,85,85,0) 100%);-webkit-mask-image:linear-gradient(180deg,transparent 0%,#000 30%,#000 70%,transparent 100%)"></div>
<div class="t" style="left:181.50px;top:111.28px;font-size:5.4px;color:#5c5c5c;transform:scaleX(0.926);transform-origin:0 0;">1</div>
<div class="t" style="left:214.90px;top:111.28px;font-size:5.4px;color:#5c5c5c;transform:scaleX(0.855);transform-origin:0 0;">1959/12/06</div>
<div class="t" style="left:244.20px;top:111.28px;font-size:5.4px;color:#5c5c5c;transform:scaleX(0.806);transform-origin:0 0;">M</div>
<div class="t" style="left:360.80px;top:111.28px;font-size:5.4px;color:#5c5c5c;transform:scaleX(0.806);transform-origin:0 0;">BRAIN</div>
<div class="t" style="left:535.90px;top:111.28px;font-size:5.4px;color:#5c5c5c;transform:scaleX(0.806);transform-origin:0 0;">CT</div>
<div class="t" style="left:639.90px;top:111.28px;font-size:5.4px;color:#5c5c5c;transform:scaleX(0.926);transform-origin:0 0;">1234</div>
<div class="t" style="left:107.20px;top:118.34px;font-size:5.4px;color:#5c5c5c;transform:scaleX(0.926);transform-origin:0 0;">8</div>
<div class="a" style="left:123px;top:119.59px;width:31.5px;height:4px;background:linear-gradient(90deg,rgba(85,85,85,0.85) 0%,rgba(85,85,85,0.765) 32%,rgba(85,85,85,0.3825) 36%,rgba(85,85,85,0.85) 40%,rgba(85,85,85,0.7224999999999999) 80%,rgba(85,85,85,0) 100%);-webkit-mask-image:linear-gradient(180deg,transparent 0%,#000 30%,#000 70%,transparent 100%)"></div>
<div class="t" style="left:181.50px;top:118.34px;font-size:5.4px;color:#5c5c5c;transform:scaleX(0.926);transform-origin:0 0;">15650160026</div>
<div class="t" style="left:214.90px;top:118.34px;font-size:5.4px;color:#5c5c5c;transform:scaleX(0.855);transform-origin:0 0;">1976/04/05</div>
<div class="t" style="left:244.20px;top:118.34px;font-size:5.4px;color:#5c5c5c;transform:scaleX(0.806);transform-origin:0 0;">M</div>
<div class="t" style="left:256.40px;top:118.34px;font-size:5.4px;color:#5c5c5c;transform:scaleX(0.926);transform-origin:0 0;">333</div>
<div class="t" style="left:360.80px;top:118.34px;font-size:5.4px;color:#5c5c5c;transform:scaleX(0.783);transform-origin:0 0;">LOW DOSE MAMMOGRAPHY B...</div>
<div class="t" style="left:431.60px;top:118.34px;font-size:5.4px;color:#5c5c5c;transform:scaleX(0.806);transform-origin:0 0;">MG</div>
<div class="t" style="left:456.90px;top:118.34px;font-size:5.4px;color:#5c5c5c;transform:scaleX(0.855);transform-origin:0 0;">2019/06/18</div>
<div class="t" style="left:486.00px;top:118.34px;font-size:5.4px;color:#5c5c5c;transform:scaleX(0.902);transform-origin:0 0;">15:12</div>
<div class="t" style="left:514.60px;top:118.34px;font-size:5.4px;color:#5c5c5c;transform:scaleX(0.806);transform-origin:0 0;">IP</div>
<div class="t" style="left:535.90px;top:118.34px;font-size:5.4px;color:#5c5c5c;transform:scaleX(0.816);transform-origin:0 0;">CONQUESTSRV2</div>
<div class="t" style="left:581.50px;top:118.34px;font-size:5.4px;color:#5c5c5c;transform:scaleX(0.816);transform-origin:0 0;">CONQUESTSRV2</div>
<div class="t" style="left:639.90px;top:118.34px;font-size:5.4px;color:#5c5c5c;transform:scaleX(0.926);transform-origin:0 0;">5555</div>
<div class="t" style="left:107.20px;top:125.40px;font-size:5.4px;color:#5c5c5c;transform:scaleX(0.926);transform-origin:0 0;">9</div>
<div class="a" style="left:123px;top:126.65px;width:28.5px;height:4px;background:linear-gradient(90deg,rgba(85,85,85,0.85) 0%,rgba(85,85,85,0.765) 26%,rgba(85,85,85,0.3825) 30%,rgba(85,85,85,0.85) 34%,rgba(85,85,85,0.7224999999999999) 80%,rgba(85,85,85,0) 100%);-webkit-mask-image:linear-gradient(180deg,transparent 0%,#000 30%,#000 70%,transparent 100%)"></div>
<div class="t" style="left:181.50px;top:125.40px;font-size:5.4px;color:#5c5c5c;transform:scaleX(0.926);transform-origin:0 0;">1</div>
<div class="t" style="left:214.90px;top:125.40px;font-size:5.4px;color:#5c5c5c;transform:scaleX(0.855);transform-origin:0 0;">1959/12/06</div>
<div class="t" style="left:244.20px;top:125.40px;font-size:5.4px;color:#5c5c5c;transform:scaleX(0.806);transform-origin:0 0;">M</div>
<div class="t" style="left:360.80px;top:125.40px;font-size:5.4px;color:#5c5c5c;transform:scaleX(0.806);transform-origin:0 0;">BRAIN</div>
<div class="t" style="left:535.90px;top:125.40px;font-size:5.4px;color:#5c5c5c;transform:scaleX(0.806);transform-origin:0 0;">CT</div>
<div class="t" style="left:639.90px;top:125.40px;font-size:5.4px;color:#5c5c5c;transform:scaleX(0.926);transform-origin:0 0;">1234</div>
<div class="t" style="left:107.20px;top:132.45px;font-size:5.4px;color:#5c5c5c;transform:scaleX(0.926);transform-origin:0 0;">10</div>
<div class="a" style="left:123px;top:133.70px;width:31.5px;height:4px;background:linear-gradient(90deg,rgba(85,85,85,0.85) 0%,rgba(85,85,85,0.765) 32%,rgba(85,85,85,0.3825) 36%,rgba(85,85,85,0.85) 40%,rgba(85,85,85,0.7224999999999999) 80%,rgba(85,85,85,0) 100%);-webkit-mask-image:linear-gradient(180deg,transparent 0%,#000 30%,#000 70%,transparent 100%)"></div>
<div class="t" style="left:181.50px;top:132.45px;font-size:5.4px;color:#5c5c5c;transform:scaleX(0.926);transform-origin:0 0;">15650160026</div>
<div class="t" style="left:214.90px;top:132.45px;font-size:5.4px;color:#5c5c5c;transform:scaleX(0.855);transform-origin:0 0;">1976/04/05</div>
<div class="t" style="left:244.20px;top:132.45px;font-size:5.4px;color:#5c5c5c;transform:scaleX(0.806);transform-origin:0 0;">M</div>
<div class="t" style="left:256.40px;top:132.45px;font-size:5.4px;color:#5c5c5c;transform:scaleX(0.926);transform-origin:0 0;">333</div>
<div class="t" style="left:360.80px;top:132.45px;font-size:5.4px;color:#5c5c5c;transform:scaleX(0.783);transform-origin:0 0;">LOW DOSE MAMMOGRAPHY B...</div>
<div class="t" style="left:431.60px;top:132.45px;font-size:5.4px;color:#5c5c5c;transform:scaleX(0.806);transform-origin:0 0;">MG</div>
<div class="t" style="left:456.90px;top:132.45px;font-size:5.4px;color:#5c5c5c;transform:scaleX(0.855);transform-origin:0 0;">2019/06/18</div>
<div class="t" style="left:486.00px;top:132.45px;font-size:5.4px;color:#5c5c5c;transform:scaleX(0.902);transform-origin:0 0;">15:12</div>
<div class="t" style="left:514.60px;top:132.45px;font-size:5.4px;color:#5c5c5c;transform:scaleX(0.806);transform-origin:0 0;">IP</div>
<div class="t" style="left:535.90px;top:132.45px;font-size:5.4px;color:#5c5c5c;transform:scaleX(0.816);transform-origin:0 0;">CONQUESTSRV2</div>
<div class="t" style="left:581.50px;top:132.45px;font-size:5.4px;color:#5c5c5c;transform:scaleX(0.816);transform-origin:0 0;">CONQUESTSRV2</div>
<div class="t" style="left:639.90px;top:132.45px;font-size:5.4px;color:#5c5c5c;transform:scaleX(0.926);transform-origin:0 0;">5555</div>
<div class="t" style="left:107.20px;top:139.51px;font-size:5.4px;color:#5c5c5c;transform:scaleX(0.926);transform-origin:0 0;">11</div>
<div class="a" style="left:123px;top:140.76px;width:31.5px;height:4px;background:linear-gradient(90deg,rgba(85,85,85,0.85) 0%,rgba(85,85,85,0.765) 32%,rgba(85,85,85,0.3825) 36%,rgba(85,85,85,0.85) 40%,rgba(85,85,85,0.7224999999999999) 80%,rgba(85,85,85,0) 100%);-webkit-mask-image:linear-gradient(180deg,transparent 0%,#000 30%,#000 70%,transparent 100%)"></div>
<div class="t" style="left:181.50px;top:139.51px;font-size:5.4px;color:#5c5c5c;transform:scaleX(0.926);transform-origin:0 0;">15650160026</div>
<div class="t" style="left:214.90px;top:139.51px;font-size:5.4px;color:#5c5c5c;transform:scaleX(0.855);transform-origin:0 0;">1976/04/05</div>
<div class="t" style="left:244.20px;top:139.51px;font-size:5.4px;color:#5c5c5c;transform:scaleX(0.806);transform-origin:0 0;">M</div>
<div class="t" style="left:256.40px;top:139.51px;font-size:5.4px;color:#5c5c5c;transform:scaleX(0.926);transform-origin:0 0;">333</div>
<div class="t" style="left:360.80px;top:139.51px;font-size:5.4px;color:#5c5c5c;transform:scaleX(0.783);transform-origin:0 0;">LOW DOSE MAMMOGRAPHY B...</div>
<div class="t" style="left:431.60px;top:139.51px;font-size:5.4px;color:#5c5c5c;transform:scaleX(0.806);transform-origin:0 0;">MG</div>
<div class="t" style="left:456.90px;top:139.51px;font-size:5.4px;color:#5c5c5c;transform:scaleX(0.855);transform-origin:0 0;">2019/06/18</div>
<div class="t" style="left:486.00px;top:139.51px;font-size:5.4px;color:#5c5c5c;transform:scaleX(0.902);transform-origin:0 0;">15:12</div>
<div class="t" style="left:514.60px;top:139.51px;font-size:5.4px;color:#5c5c5c;transform:scaleX(0.806);transform-origin:0 0;">IP</div>
<div class="t" style="left:581.50px;top:139.51px;font-size:5.4px;color:#5c5c5c;transform:scaleX(0.856);transform-origin:0 0;">FUSION2279_2</div>
<div class="t" style="left:639.90px;top:139.51px;font-size:5.4px;color:#5c5c5c;transform:scaleX(0.926);transform-origin:0 0;">5555</div>
<div class="t" style="left:107.20px;top:146.56px;font-size:5.4px;color:#5c5c5c;transform:scaleX(0.926);transform-origin:0 0;">12</div>
<div class="a" style="left:123px;top:147.82px;width:54px;height:4px;background:linear-gradient(90deg,rgba(85,85,85,0.85) 0%,rgba(85,85,85,0.765) 38%,rgba(85,85,85,0.3825) 42%,rgba(85,85,85,0.85) 46%,rgba(85,85,85,0.7224999999999999) 80%,rgba(85,85,85,0) 100%);-webkit-mask-image:linear-gradient(180deg,transparent 0%,#000 30%,#000 70%,transparent 100%)"></div>
<div class="t" style="left:181.50px;top:146.56px;font-size:5.4px;color:#5c5c5c;transform:scaleX(0.926);transform-origin:0 0;">700700</div>
<div class="t" style="left:214.90px;top:146.56px;font-size:5.4px;color:#5c5c5c;transform:scaleX(0.855);transform-origin:0 0;">1973/12/15</div>
<div class="t" style="left:244.20px;top:146.56px;font-size:5.4px;color:#5c5c5c;transform:scaleX(0.806);transform-origin:0 0;">M</div>
<div class="t" style="left:256.40px;top:146.56px;font-size:5.4px;color:#5c5c5c;transform:scaleX(0.926);transform-origin:0 0;">54847</div>
<div class="t" style="left:360.80px;top:146.56px;font-size:5.4px;color:#5c5c5c;transform:scaleX(0.781);transform-origin:0 0;">AJONBKH TOMOGRAFIA UVRA...</div>
<div class="t" style="left:431.60px;top:146.56px;font-size:5.4px;color:#5c5c5c;transform:scaleX(0.806);transform-origin:0 0;">CT</div>
<div class="t" style="left:456.90px;top:146.56px;font-size:5.4px;color:#5c5c5c;transform:scaleX(0.855);transform-origin:0 0;">2019/03/15</div>
<div class="t" style="left:486.00px;top:146.56px;font-size:5.4px;color:#5c5c5c;transform:scaleX(0.902);transform-origin:0 0;">08:52</div>
<div class="t" style="left:514.60px;top:146.56px;font-size:5.4px;color:#5c5c5c;transform:scaleX(0.806);transform-origin:0 0;">IP</div>
<div class="t" style="left:581.50px;top:146.56px;font-size:5.4px;color:#5c5c5c;transform:scaleX(0.866);transform-origin:0 0;">CTAWP73120</div>
<div class="t" style="left:639.90px;top:146.56px;font-size:5.4px;color:#5c5c5c;transform:scaleX(0.926);transform-origin:0 0;">21100</div>
<div class="t" style="left:107.20px;top:153.62px;font-size:5.4px;color:#5c5c5c;transform:scaleX(0.926);transform-origin:0 0;">13</div>
<div class="a" style="left:123px;top:154.87px;width:54px;height:4px;background:linear-gradient(90deg,rgba(85,85,85,0.85) 0%,rgba(85,85,85,0.765) 38%,rgba(85,85,85,0.3825) 42%,rgba(85,85,85,0.85) 46%,rgba(85,85,85,0.7224999999999999) 80%,rgba(85,85,85,0) 100%);-webkit-mask-image:linear-gradient(180deg,transparent 0%,#000 30%,#000 70%,transparent 100%)"></div>
<div class="t" style="left:181.50px;top:153.62px;font-size:5.4px;color:#5c5c5c;transform:scaleX(0.926);transform-origin:0 0;">700700</div>
<div class="t" style="left:214.90px;top:153.62px;font-size:5.4px;color:#5c5c5c;transform:scaleX(0.855);transform-origin:0 0;">1973/12/15</div>
<div class="t" style="left:244.20px;top:153.62px;font-size:5.4px;color:#5c5c5c;transform:scaleX(0.806);transform-origin:0 0;">M</div>
<div class="t" style="left:256.40px;top:153.62px;font-size:5.4px;color:#5c5c5c;transform:scaleX(0.926);transform-origin:0 0;">54847</div>
<div class="t" style="left:360.80px;top:153.62px;font-size:5.4px;color:#5c5c5c;transform:scaleX(0.781);transform-origin:0 0;">AJONBKH TOMOGRAFIA UVRA...</div>
<div class="t" style="left:431.60px;top:153.62px;font-size:5.4px;color:#5c5c5c;transform:scaleX(0.806);transform-origin:0 0;">CT</div>
<div class="t" style="left:456.90px;top:153.62px;font-size:5.4px;color:#5c5c5c;transform:scaleX(0.855);transform-origin:0 0;">2019/03/15</div>
<div class="t" style="left:486.00px;top:153.62px;font-size:5.4px;color:#5c5c5c;transform:scaleX(0.902);transform-origin:0 0;">08:52</div>
<div class="t" style="left:514.60px;top:153.62px;font-size:5.4px;color:#5c5c5c;transform:scaleX(0.806);transform-origin:0 0;">IP</div>
<div class="t" style="left:581.50px;top:153.62px;font-size:5.4px;color:#5c5c5c;transform:scaleX(0.866);transform-origin:0 0;">CTAWP73120</div>
<div class="t" style="left:639.90px;top:153.62px;font-size:5.4px;color:#5c5c5c;transform:scaleX(0.926);transform-origin:0 0;">21100</div>
<div class="t" style="left:107.20px;top:160.68px;font-size:5.4px;color:#5c5c5c;transform:scaleX(0.926);transform-origin:0 0;">14</div>
<div class="a" style="left:123px;top:161.93px;width:54px;height:4px;background:linear-gradient(90deg,rgba(85,85,85,0.85) 0%,rgba(85,85,85,0.765) 38%,rgba(85,85,85,0.3825) 42%,rgba(85,85,85,0.85) 46%,rgba(85,85,85,0.7224999999999999) 80%,rgba(85,85,85,0) 100%);-webkit-mask-image:linear-gradient(180deg,transparent 0%,#000 30%,#000 70%,transparent 100%)"></div>
<div class="t" style="left:181.50px;top:160.68px;font-size:5.4px;color:#5c5c5c;transform:scaleX(0.926);transform-origin:0 0;">700700</div>
<div class="t" style="left:214.90px;top:160.68px;font-size:5.4px;color:#5c5c5c;transform:scaleX(0.855);transform-origin:0 0;">1973/12/15</div>
<div class="t" style="left:244.20px;top:160.68px;font-size:5.4px;color:#5c5c5c;transform:scaleX(0.806);transform-origin:0 0;">M</div>
<div class="t" style="left:256.40px;top:160.68px;font-size:5.4px;color:#5c5c5c;transform:scaleX(0.926);transform-origin:0 0;">54847</div>
<div class="t" style="left:360.80px;top:160.68px;font-size:5.4px;color:#5c5c5c;transform:scaleX(0.781);transform-origin:0 0;">AJONBKH TOMOGRAFIA UVRA...</div>
<div class="t" style="left:431.60px;top:160.68px;font-size:5.4px;color:#5c5c5c;transform:scaleX(0.806);transform-origin:0 0;">CT</div>
<div class="t" style="left:456.90px;top:160.68px;font-size:5.4px;color:#5c5c5c;transform:scaleX(0.855);transform-origin:0 0;">2019/03/15</div>
<div class="t" style="left:486.00px;top:160.68px;font-size:5.4px;color:#5c5c5c;transform:scaleX(0.902);transform-origin:0 0;">08:52</div>
<div class="t" style="left:514.60px;top:160.68px;font-size:5.4px;color:#5c5c5c;transform:scaleX(0.806);transform-origin:0 0;">IP</div>
<div class="t" style="left:581.50px;top:160.68px;font-size:5.4px;color:#5c5c5c;transform:scaleX(0.866);transform-origin:0 0;">CTAWP73120</div>
<div class="t" style="left:639.90px;top:160.68px;font-size:5.4px;color:#5c5c5c;transform:scaleX(0.926);transform-origin:0 0;">21100</div>
<div class="t" style="left:107.20px;top:167.73px;font-size:5.4px;color:#5c5c5c;transform:scaleX(0.926);transform-origin:0 0;">15</div>
<div class="a" style="left:123px;top:168.98px;width:28.5px;height:4px;background:linear-gradient(90deg,rgba(85,85,85,0.85) 0%,rgba(85,85,85,0.765) 26%,rgba(85,85,85,0.3825) 30%,rgba(85,85,85,0.85) 34%,rgba(85,85,85,0.7224999999999999) 80%,rgba(85,85,85,0) 100%);-webkit-mask-image:linear-gradient(180deg,transparent 0%,#000 30%,#000 70%,transparent 100%)"></div>
<div class="t" style="left:181.50px;top:167.73px;font-size:5.4px;color:#5c5c5c;transform:scaleX(0.926);transform-origin:0 0;">1</div>
<div class="t" style="left:214.90px;top:167.73px;font-size:5.4px;color:#5c5c5c;transform:scaleX(0.855);transform-origin:0 0;">1959/12/06</div>
<div class="t" style="left:244.20px;top:167.73px;font-size:5.4px;color:#5c5c5c;transform:scaleX(0.806);transform-origin:0 0;">M</div>
<div class="t" style="left:360.80px;top:167.73px;font-size:5.4px;color:#5c5c5c;transform:scaleX(0.806);transform-origin:0 0;">BRAIN</div>
<div class="t" style="left:456.90px;top:167.73px;font-size:5.4px;color:#5c5c5c;transform:scaleX(0.855);transform-origin:0 0;">2005/12/30</div>
<div class="t" style="left:486.00px;top:167.73px;font-size:5.4px;color:#5c5c5c;transform:scaleX(0.896);transform-origin:0 0;">16:13:52</div>
<div class="t" style="left:514.60px;top:167.73px;font-size:5.4px;color:#5c5c5c;transform:scaleX(0.806);transform-origin:0 0;">SC</div>
<div class="t" style="left:535.90px;top:167.73px;font-size:5.4px;color:#5c5c5c;transform:scaleX(0.806);transform-origin:0 0;">CT</div>
<div class="t" style="left:639.90px;top:167.73px;font-size:5.4px;color:#5c5c5c;transform:scaleX(0.926);transform-origin:0 0;">1234</div>
<div class="t" style="left:107.20px;top:174.79px;font-size:5.4px;color:#5c5c5c;transform:scaleX(0.926);transform-origin:0 0;">16</div>
<div class="a" style="left:123px;top:176.04px;width:28.5px;height:4px;background:linear-gradient(90deg,rgba(85,85,85,0.85) 0%,rgba(85,85,85,0.765) 26%,rgba(85,85,85,0.3825) 30%,rgba(85,85,85,0.85) 34%,rgba(85,85,85,0.7224999999999999) 80%,rgba(85,85,85,0) 100%);-webkit-mask-image:linear-gradient(180deg,transparent 0%,#000 30%,#000 70%,transparent 100%)"></div>
<div class="t" style="left:181.50px;top:174.79px;font-size:5.4px;color:#5c5c5c;transform:scaleX(0.926);transform-origin:0 0;">1</div>
<div class="t" style="left:214.90px;top:174.79px;font-size:5.4px;color:#5c5c5c;transform:scaleX(0.855);transform-origin:0 0;">1959/12/06</div>
<div class="t" style="left:244.20px;top:174.79px;font-size:5.4px;color:#5c5c5c;transform:scaleX(0.806);transform-origin:0 0;">M</div>
<div class="t" style="left:360.80px;top:174.79px;font-size:5.4px;color:#5c5c5c;transform:scaleX(0.806);transform-origin:0 0;">BRAIN</div>
<div class="t" style="left:456.90px;top:174.79px;font-size:5.4px;color:#5c5c5c;transform:scaleX(0.855);transform-origin:0 0;">2005/12/30</div>
<div class="t" style="left:486.00px;top:174.79px;font-size:5.4px;color:#5c5c5c;transform:scaleX(0.896);transform-origin:0 0;">16:13:52</div>
<div class="t" style="left:514.60px;top:174.79px;font-size:5.4px;color:#5c5c5c;transform:scaleX(0.806);transform-origin:0 0;">SC</div>
<div class="t" style="left:535.90px;top:174.79px;font-size:5.4px;color:#5c5c5c;transform:scaleX(0.806);transform-origin:0 0;">CT</div>
<div class="t" style="left:639.90px;top:174.79px;font-size:5.4px;color:#5c5c5c;transform:scaleX(0.926);transform-origin:0 0;">1234</div>
<svg style="left:0;top:0" width="800" height="433"><rect x="710.7" y="46.5" width="86" height="8.4" fill="#0085b9"/></svg>
<div class="t" style="left:734.19px;top:47.90px;font-size:5.4px;color:#fff;font-weight:bold;transform:scaleX(0.923);transform-origin:50% 0;">Search Results</div>
<svg style="left:0;top:0" width="800" height="433"><rect x="710.8" y="165.5" width="85.7" height="8.4" fill="#0085b9"/></svg>
<div class="t" style="left:736.45px;top:166.90px;font-size:5.4px;color:#fff;font-weight:bold;transform:scaleX(0.921);transform-origin:50% 0;">Worklist Data</div>
<div class="ib" style="left:711px;top:57.9px"></div>
<div class="t" style="left:724.60px;top:61.15px;font-size:5.4px;color:#565656;transform:scaleX(0.803);transform-origin:0 0;">View Record</div>
<div class="ib" style="left:711px;top:73.7px"></div>
<div class="t" style="left:724.60px;top:75.15px;font-size:5.4px;color:#565656;transform:scaleX(0.806);transform-origin:0 0;">Edit Record</div>
<div class="ib" style="left:711px;top:88.8px"></div>
<div class="t" style="left:724.60px;top:89.80px;font-size:5.4px;color:#565656;transform:scaleX(0.806);transform-origin:0 0;">Duplicate Record</div>
<div class="ib" style="left:711px;top:103.1px"></div>
<div class="t" style="left:724.60px;top:105.85px;font-size:5.4px;color:#565656;transform:scaleX(0.802);transform-origin:0 0;">Send Record To HL7 Node</div>
<div class="ib" style="left:711px;top:117.4px"></div>
<div class="t" style="left:724.60px;top:120.65px;font-size:5.4px;color:#565656;transform:scaleX(0.806);transform-origin:0 0;">Export Record</div>
<div class="ib" style="left:711px;top:133.4px"></div>
<div class="t" style="left:724.60px;top:134.95px;font-size:5.4px;color:#565656;transform:scaleX(0.806);transform-origin:0 0;">Copy Record To Clipboard</div>
<div class="ib" style="left:711px;top:148.1px"></div>
<div class="t" style="left:724.60px;top:148.85px;font-size:5.4px;color:#565656;transform:scaleX(0.806);transform-origin:0 0;">Delete Record</div>
<div class="ib" style="left:711px;top:178.5px"></div>
<div class="t" style="left:724.60px;top:180.15px;font-size:5.4px;color:#565656;transform:scaleX(0.806);transform-origin:0 0;">Create New Record</div>
<div class="ib" style="left:711px;top:193.2px"></div>
<div class="t" style="left:724.60px;top:196.25px;font-size:5.4px;color:#565656;transform:scaleX(0.811);transform-origin:0 0;">Import HL7 Data From File</div>
<div class="ib" style="left:711px;top:208px"></div>
<div class="t" style="left:724.60px;top:210.55px;font-size:5.4px;color:#565656;transform:scaleX(0.806);transform-origin:0 0;">Query Other DICOM Worklist</div>
<div class="ib" style="left:711px;top:224px"></div>
<div class="t" style="left:724.60px;top:224.95px;font-size:5.4px;color:#565656;transform:scaleX(0.810);transform-origin:0 0;">Database To HL7 Field Mapping</div>
<div class="ib" style="left:711px;top:238.3px"></div>
<div class="t" style="left:724.60px;top:239.45px;font-size:5.4px;color:#565656;transform:scaleX(0.797);transform-origin:0 0;">Compose And Send HL7 Message</div>
<svg style="left:0;top:0" width="800" height="260"><rect x="712.9" y="59.4" width="8.100000000000023" height="1.2" fill="#5b93dd"/><circle cx="716.3" cy="63.3" r="2.1" fill="#e4f0fa" stroke="#8aa0b0" stroke-width="0.5"/><path d="M717.9 64.9L720.6 67.3" stroke="#333" stroke-width="0.9"/><rect x="712.9" y="75.2" width="8.100000000000023" height="1.2" fill="#5b93dd"/><path d="M714.6 82.9L719.2 78.5" stroke="#f2b040" stroke-width="1.3"/><path d="M714 83.5L714.7 82.8" stroke="#777" stroke-width="0.6"/><path d="M718.9 78.8L720.3 77.5" stroke="#c82020" stroke-width="1.4"/><rect x="712.9" y="90.3" width="8.100000000000023" height="1.2" fill="#5b93dd"/><path d="M714 98.39999999999999L718 94.39999999999999" stroke="#f2b040" stroke-width="1.3"/><path d="M717.8 94.6L719 93.39999999999999" stroke="#c82020" stroke-width="1.3"/><circle cx="719.4" cy="95.2" r="1.1" fill="#4a7cd0"/><path d="M717.8 99.0L719.4 96.2L721 99.0Z" fill="#3a64c0"/><rect x="712.9" y="104.6" width="8.100000000000023" height="1.2" fill="#5b93dd"/><path d="M716.9 109.6H719.2" stroke="#2a6ad0" stroke-width="0.9"/><path d="M718.8 108.19999999999999L721.2 109.6L718.8 111.0Z" fill="#2a6ad0"/><rect x="712.9" y="118.9" width="8.100000000000023" height="1.2" fill="#5b93dd"/><path d="M716.6 122.30000000000001V125.4" stroke="#2a6ad0" stroke-width="0.9"/><path d="M715.2 125.0L716.6 127.30000000000001L718 125.0Z" fill="#2a6ad0"/><rect x="713" y="134.9" width="5.5" height="0.8" fill="#4080d0"/><rect x="715.2" y="137.0" width="5.8" height="0.8" fill="#4080d0"/><rect x="711.6" y="139.4" width="10.6" height="4.6" fill="#eaeaea"/><rect x="712.9" y="149.6" width="8.100000000000023" height="1.2" fill="#5b93dd"/><path d="M717.2 154.5L720.6 157.9M720.6 154.5L717.2 157.9" stroke="#d02020" stroke-width="0.9"/><rect x="716.2" y="180.0" width="4.7999999999999545" height="1.2" fill="#5b93dd"/><path d="M713.2 181.9H716.4M714.8 180.3V183.5M713.6 180.7L716 183.1M716 180.7L713.6 183.1" stroke="#f0a030" stroke-width="0.6"/><rect x="712.9" y="194.29999999999998" width="8.100000000000023" height="1.3" fill="#5b93dd"/><path d="M716.9 200.6H720.9M718.9 198.6V202.6" stroke="#30a030" stroke-width="0.9"/><rect x="711.6" y="208.6" width="10.6" height="10" fill="#c8c8c8"/><circle cx="715.2" cy="212.2" r="2.5" fill="#3a8ee0"/><circle cx="719.4" cy="210.8" r="1.8" fill="#3a98f0"/><circle cx="714.8" cy="211.6" r="1.3" fill="#e0f4ff"/><path d="M716.5 214L721 217.5" stroke="#1a1a1a" stroke-width="0.9"/><rect x="716.3" y="225.9" width="1.2" height="7.8" fill="#1a3a7a"/><rect x="717.5" y="226.3" width="3.7" height="1.9" fill="#e02020"/><path d="M712 229.5H716.3" stroke="#f0a040" stroke-width="1.1"/><rect x="716.3" y="239.8" width="4.7000000000000455" height="1.2" fill="#5b93dd"/><path d="M712.8 240.60000000000002H715.8M714.3 239.10000000000002V242.10000000000002M713.2 239.5L715.4 241.70000000000002M715.4 239.5L713.2 241.70000000000002" stroke="#f0a030" stroke-width="0.6"/><path d="M716.6 244.8H719" stroke="#2a6ad0" stroke-width="0.9"/><path d="M718.7 243.4L721.2 244.8L718.7 246.20000000000002Z" fill="#2a6ad0"/></svg>
<svg style="left:0;top:0" width="800" height="433"><rect x="5" y="419" width="791" height="9.8" fill="#0085b9"/></svg>
<div class="t" style="left:352.75px;top:421.10px;font-size:5.3px;color:#fff;font-weight:bold;transform:scaleX(0.933);transform-origin:50% 0;">Copyright © 2020-2021, Santesoft LTD</div>
</body></html>
